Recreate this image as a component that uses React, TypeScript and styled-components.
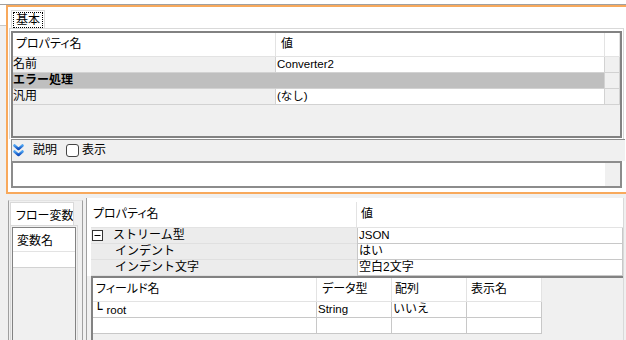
import React from "react";
import styled, { createGlobalStyle } from "styled-components";

const GlobalStyle = createGlobalStyle`
  html, body {
    margin: 0;
    padding: 0;
  }
  body {
    background: #f0f0f0;
    font-family: "Liberation Sans", "Noto Sans CJK JP", sans-serif;
    font-size: 12px;
    color: #000;
  }
  * {
    box-sizing: border-box;
  }
`;

const Page = styled.div`
  width: 626px;
  height: 340px;
  display: flex;
  flex-direction: column;
  background: #f0f0f0;
  overflow: hidden;
`;

const TopEdge = styled.div`
  flex-shrink: 0;
  height: 5px;
  background: #fff;
  border-bottom: 1px solid #a0a0a0;
`;

const TopRow = styled.div`
  flex-shrink: 0;
  height: 189px;
  display: flex;
`;

const Gutter = styled.div`
  width: 6px;
`;

const GutterCap = styled.div`
  height: 21px;
  background: #fff;
  border-bottom: 1px solid #c8c8c8;
`;

const Frame = styled.div`
  flex: 1;
  display: flex;
  flex-direction: column;
  background: #fff;
  border: 2px solid #f8a95c;
  border-right: none;
`;

const TabStrip = styled.div`
  height: 21px;
  flex-shrink: 0;
  display: flex;
  padding-left: 3px;
`;

const Tab = styled.div<{ $w: number }>`
  margin-top: 3px;
  width: ${(p) => p.$w}px;
  height: 18px;
  padding: 1px 1px 0 1px;
  background: #fff;
  border: 1px solid #d9d9d9;
  border-bottom: none;
`;

const Focus = styled.div`
  height: 100%;
  display: flex;
  align-items: center;
  padding-left: 2px;
  border: 1px dotted #000;
  line-height: 14px;
`;

const TabBody = styled.div`
  flex-shrink: 0;
  margin-left: 1px;
  width: 615px;
  height: 111px;
  padding: 2px 0 1px 1px;
  border: 1px solid #d9d9d9;
  border-bottom: none;
`;

const Grid = styled.div<{ $cols: string; $rows: string }>`
  display: grid;
  grid-template-columns: ${(p) => p.$cols};
  grid-template-rows: ${(p) => p.$rows};
  background: #f0f0f0;
  border: 2px solid #828282;
`;

const MainGrid = styled(Grid)`
  width: 611px;
  height: 107px;
`;

const Cell = styled.div<{ $bg?: string; $pad?: number; $palt?: boolean; $bold?: boolean; $span?: string }>`
  display: flex;
  align-items: center;
  overflow: hidden;
  white-space: nowrap;
  line-height: 15px;
  padding-left: ${(p) => p.$pad ?? 0}px;
  background: ${(p) => p.$bg ?? "#fff"};
  font-feature-settings: ${(p) => (p.$palt ? '"palt"' : "normal")};
  font-weight: ${(p) => (p.$bold ? 700 : 400)};
  grid-column: ${(p) => p.$span ?? "auto"};
`;

const HeadCell = styled(Cell)`
  border-right: 1px solid #e3e3e3;
  border-bottom: 1px solid #e3e3e3;
`;

const RowCell = styled(Cell)`
  border-right: 1px solid #d2d2d2;
  border-bottom: 1px solid #d2d2d2;
`;

const Filler = styled.div`
  grid-column: 1 / -1;
  background: #f0f0f0;
`;

const Latin = styled.span`
  font-size: 11.5px;
`;

const Desc = styled.div`
  flex-shrink: 0;
  margin-left: 3px;
  width: 614px;
  border-top: 1px solid #8c8c8c;
  border-left: 1px solid #8c8c8c;
`;

const DescBar = styled.div`
  height: 21px;
  display: flex;
  align-items: center;
  padding-left: 1px;
  background: #f0f0f0;
`;

const Label = styled.span<{ $ml: number }>`
  margin-left: ${(p) => p.$ml}px;
  line-height: 15px;
`;

const Check = styled.span`
  margin-left: 9px;
  width: 13px;
  height: 13px;
  background: #fff;
  border: 1px solid #444;
  border-radius: 3px;
`;

const DescBox = styled.div`
  margin-left: -1px;
  width: 611px;
  height: 27px;
  display: flex;
  justify-content: flex-end;
  background: #fff;
  border: 2px solid #8c8c8c;
`;

const ScrollStrip = styled.div`
  width: 15px;
  background: #f0f0f0;
`;

const BottomRow = styled.div`
  flex: 1;
  min-height: 0;
  display: flex;
`;

const LeftPanel = styled.div`
  width: 83px;
  padding: 6px 0 0 8px;
`;

const LeftFrame = styled.div`
  height: 100%;
  padding-top: 1px;
  border-left: 1px solid #a0a0a0;
  border-top: 1px solid #e3e3e3;
  border-right: 1px solid #a0a0a0;
`;

const SideTab = styled.div`
  margin-left: 1px;
  width: 64px;
  height: 23px;
  display: flex;
  align-items: center;
  padding-left: 5px;
  white-space: nowrap;
  overflow: hidden;
  background: #fff;
  border: 1px solid #d9d9d9;
  border-bottom: none;
  font-feature-settings: "palt";
`;

const SidePage = styled.div`
  margin-left: 1px;
  width: 68px;
  height: 120px;
  padding: 1px;
  border: 1px solid #d9d9d9;
  border-bottom: none;
`;

const ListBox = styled.div`
  width: 64px;
  height: 100%;
  background: #f0f0f0;
  border: 1px solid #828282;
  border-bottom: none;
`;

const ListRow = styled.div<{ $h: number; $line: string }>`
  height: ${(p) => p.$h}px;
  display: flex;
  align-items: center;
  padding-left: 4px;
  background: #fff;
  border-bottom: 1px solid ${(p) => p.$line};
  font-feature-settings: "palt";
`;

const RightPanel = styled.div`
  margin: 4px 0 0 3px;
  width: 538px;
  display: flex;
  flex-direction: column;
  background: #fff;
  border-left: 1px solid #a0a0a0;
  border-right: 1px solid #d9d9d9;
`;

const PropGrid = styled.div`
  flex-shrink: 0;
  margin: 4px 0 0 4px;
  width: 532px;
  display: grid;
  grid-template-columns: 266px 266px;
  grid-template-rows: 26px 16px 16px 16px;
`;

const ValueCell = styled(Cell)`
  border: 1px solid #c8c8c8;
  border-top: none;
`;

const NameCell = styled(Cell)`
  border-bottom: 1px solid #e0e0e0;
`;

const SubArea = styled.div`
  flex: 1;
  min-height: 0;
  padding-left: 4px;
  background: #f0f0f0;
`;

const SubGrid = styled(Grid)`
  width: 532px;
  height: 100%;
  border-right: none;
  border-bottom: none;
`;

const SubCell = styled(Cell)`
  border-right: 1px solid #c8c8c8;
  border-bottom: 1px solid #c8c8c8;
`;

const TreeLabel = styled.span`
  padding-left: 0;
`;

const Elbow = styled.span`
  font-family: "DejaVu Sans Mono", monospace;
  font-size: 14px;
  margin-right: 4px;
`;

const ChevronIcon = () => (
  <svg width="11" height="13" viewBox="0 0 11 13">
    <defs>
      <linearGradient id="chev" x1="0" y1="0" x2="0" y2="1">
        <stop offset="0" stopColor="#4aa0f0" />
        <stop offset="1" stopColor="#0f4cbc" />
      </linearGradient>
    </defs>
    <polyline points="1.5,1.5 5.5,5 9.5,1.5" fill="none" stroke="url(#chev)" strokeWidth="2.6" strokeLinejoin="round" strokeLinecap="round" />
    <polyline points="1.5,7.5 5.5,11 9.5,7.5" fill="none" stroke="url(#chev)" strokeWidth="2.6" strokeLinejoin="round" strokeLinecap="round" />
  </svg>
);

const CollapseIcon = () => (
  <svg width="11" height="11" viewBox="0 0 11 11" style={{ marginRight: 10 }}>
    <rect x="0.5" y="0.5" width="10" height="10" fill="#fff" stroke="#333" />
    <line x1="2.5" y1="5.5" x2="8.5" y2="5.5" stroke="#000" />
  </svg>
);

const App = () => {
  return (
    <Page>
      <GlobalStyle />
      <TopEdge />
      <TopRow>
        <Gutter>
          <GutterCap />
        </Gutter>
        <Frame>
          <TabStrip>
            <Tab $w={34}>
              <Focus>基本</Focus>
            </Tab>
          </TabStrip>
          <TabBody>
            <MainGrid $cols="263px 329px 15px" $rows="24px 16px 16px 16px 1fr">
              <HeadCell $pad={3} $palt>プロパティ名</HeadCell>
              <HeadCell $pad={5}>値</HeadCell>
              <HeadCell />
              <RowCell $bg="#f0f0f0">名前</RowCell>
              <RowCell $pad={1}>
                <Latin>Converter2</Latin>
              </RowCell>
              <RowCell $bg="#f0f0f0" />
              <RowCell $bg="#bfbfbf" $bold $span="span 2">
                エラー処理
              </RowCell>
              <RowCell $bg="#f0f0f0" />
              <RowCell $bg="#f0f0f0">汎用</RowCell>
              <RowCell $pad={1}>
                <Latin>(なし)</Latin>
              </RowCell>
              <RowCell $bg="#f0f0f0" />
              <Filler />
            </MainGrid>
          </TabBody>
          <Desc>
            <DescBar>
              <ChevronIcon />
              <Label $ml={9}>説明</Label>
              <Check />
              <Label $ml={3}>表示</Label>
            </DescBar>
            <DescBox>
              <ScrollStrip />
            </DescBox>
          </Desc>
        </Frame>
      </TopRow>
      <BottomRow>
        <LeftPanel>
          <LeftFrame>
            <SideTab>フロー変数</SideTab>
            <SidePage>
              <ListBox>
                <ListRow $h={24} $line="#e3e3e3">変数名</ListRow>
                <ListRow $h={16} $line="#d2d2d2" />
              </ListBox>
            </SidePage>
          </LeftFrame>
        </LeftPanel>
        <RightPanel>
          <PropGrid>
            <HeadCell $pad={2} $palt>プロパティ名</HeadCell>
            <Cell $pad={4} style={{ borderBottom: "1px solid #e3e3e3" }}>値</Cell>
            <NameCell $bg="#ececec" $pad={1}>
              <CollapseIcon />
              ストリーム型
            </NameCell>
            <ValueCell $pad={1}>
              <Latin>JSON</Latin>
            </ValueCell>
            <NameCell $bg="#ececec" $pad={24}>インデント</NameCell>
            <ValueCell $pad={1}>はい</ValueCell>
            <NameCell $bg="#ececec" $pad={24}>インデント文字</NameCell>
            <ValueCell $pad={1}>空白2文字</ValueCell>
          </PropGrid>
          <SubArea>
            <SubGrid $cols="224px 75px 75px 75px" $rows="24px 16px 16px 1fr">
              <HeadCell $pad={3} $palt>フィールド名</HeadCell>
              <HeadCell $pad={5} $palt>データ型</HeadCell>
              <HeadCell $pad={3}>配列</HeadCell>
              <HeadCell $pad={4}>表示名</HeadCell>
              <SubCell $pad={1}>
                <TreeLabel>
                  <Elbow>└</Elbow>
                  <Latin>root</Latin>
                </TreeLabel>
              </SubCell>
              <SubCell $pad={1}>
                <Latin>String</Latin>
              </SubCell>
              <SubCell $pad={1}>いいえ</SubCell>
              <SubCell />
              <SubCell />
              <SubCell />
              <SubCell />
              <SubCell />
              <Filler />
            </SubGrid>
          </SubArea>
        </RightPanel>
      </BottomRow>
    </Page>
  );
};

export default App;
